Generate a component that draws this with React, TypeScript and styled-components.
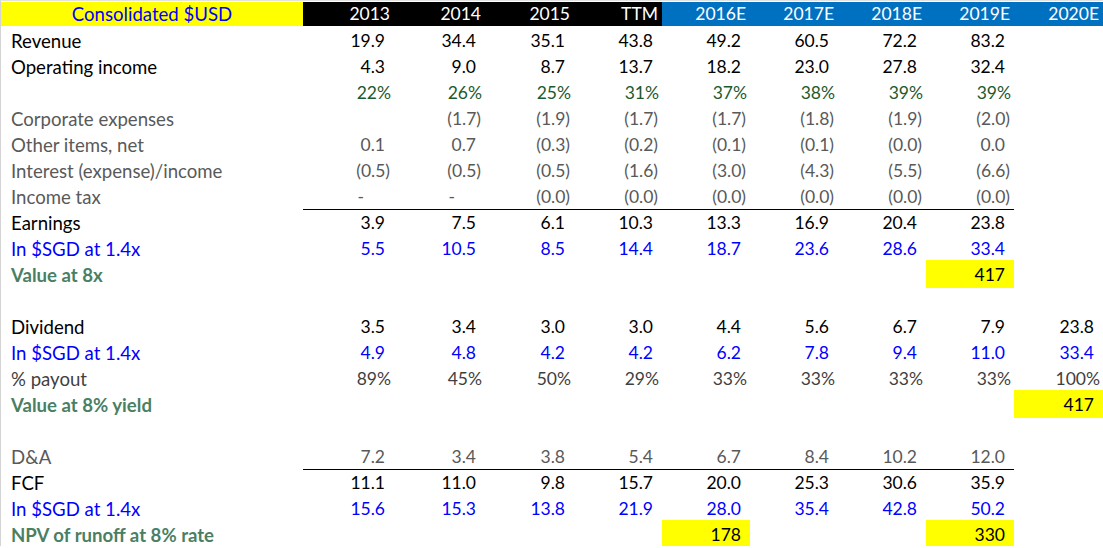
import React from "react";
import styled, { createGlobalStyle, css } from "styled-components";

const Global = createGlobalStyle`
  html, body { margin: 0; padding: 0; background: #ffffff; }
  body { font-family: Lato, "Open Sans", "Liberation Sans", sans-serif; }
`;

type Tone = "black" | "gray" | "dark" | "blue" | "pct" | "value" | "white";

const toneColor: Record<Tone, string> = {
  black: "#000000",
  gray: "#595959",
  dark: "#3f3f3f",
  blue: "#0000ff",
  pct: "#1c5a2c",
  value: "#4a7f64",
  white: "#ffffff",
};

const COLS = "302px 91px 91px 89px 88px 88px 88px 88px 88px 89px";

const Sheet = styled.div`
  width: 1102px;
  border-left: 1px solid #d4d4d4;
  border-top: 1px solid #e2e2e2;
  padding-top: 1px;
  font-size: 17.5px;
`;

const Row = styled.div<{ $head?: boolean }>`
  display: grid;
  grid-template-columns: ${COLS};
  height: ${(p) => (p.$head ? "24px" : "26px")};
`;

const HeadCell = styled.div<{ $bg: string; $fg: string; $center?: boolean }>`
  background: ${(p) => p.$bg};
  color: ${(p) => p.$fg};
  font-size: ${(p) => (p.$center ? "18.6px" : "17.5px")};
  line-height: 24px;
  text-align: ${(p) => (p.$center ? "center" : "right")};
  padding-right: ${(p) => (p.$center ? "0" : "4px")};
  white-space: nowrap;
  box-sizing: border-box;
`;

const LabelCell = styled.div<{ $tone: Tone; $bold?: boolean }>`
  color: ${(p) => toneColor[p.$tone]};
  font-weight: ${(p) => (p.$bold ? 700 : 400)};
  font-size: 18.6px;
  line-height: 26px;
  padding: 2px 0 0 10px;
  box-sizing: border-box;
  white-space: nowrap;
`;

type Kind = "num" | "paren" | "pct" | "dash" | "empty";

const padFor: Record<Kind, string> = {
  num: "9px",
  paren: "4px",
  pct: "3px",
  dash: "30px",
  empty: "0",
};

const NumCell = styled.div<{ $tone: Tone; $kind: Kind; $hl?: boolean; $rule?: boolean }>`
  color: ${(p) => toneColor[p.$tone]};
  line-height: 26px;
  padding-top: 2px;
  padding-right: ${(p) => padFor[p.$kind]};
  text-align: right;
  box-sizing: border-box;
  white-space: nowrap;
  ${(p) =>
    p.$hl &&
    css`
      background: #ffff00;
    `}
  ${(p) =>
    p.$rule &&
    css`
      box-shadow: inset 0 -1px 0 #000000;
    `}
`;

type RowSpec = {
  label: string;
  tone: Tone;
  bold?: boolean;
  values: (string | null)[];
  highlight?: number[];
  rule?: boolean;
  valueTone?: Tone;
};

const kindOf = (v: string | null): Kind => {
  if (v === null || v === "") return "empty";
  if (v === "-") return "dash";
  if (v.startsWith("(")) return "paren";
  if (v.endsWith("%")) return "pct";
  return "num";
};

const rows: RowSpec[] = [
  { label: "Revenue", tone: "black", values: ["19.9", "34.4", "35.1", "43.8", "49.2", "60.5", "72.2", "83.2", null] },
  { label: "Operating income", tone: "black", values: ["4.3", "9.0", "8.7", "13.7", "18.2", "23.0", "27.8", "32.4", null] },
  { label: "", tone: "pct", values: ["22%", "26%", "25%", "31%", "37%", "38%", "39%", "39%", null] },
  { label: "Corporate expenses", tone: "gray", values: [null, "(1.7)", "(1.9)", "(1.7)", "(1.7)", "(1.8)", "(1.9)", "(2.0)", null] },
  { label: "Other items, net", tone: "gray", values: ["0.1", "0.7", "(0.3)", "(0.2)", "(0.1)", "(0.1)", "(0.0)", "0.0", null] },
  { label: "Interest (expense)/income", tone: "gray", values: ["(0.5)", "(0.5)", "(0.5)", "(1.6)", "(3.0)", "(4.3)", "(5.5)", "(6.6)", null] },
  { label: "Income tax", tone: "gray", rule: true, values: ["-", "-", "(0.0)", "(0.0)", "(0.0)", "(0.0)", "(0.0)", "(0.0)", null] },
  { label: "Earnings", tone: "black", values: ["3.9", "7.5", "6.1", "10.3", "13.3", "16.9", "20.4", "23.8", null] },
  { label: "In $SGD at 1.4x", tone: "blue", values: ["5.5", "10.5", "8.5", "14.4", "18.7", "23.6", "28.6", "33.4", null] },
  { label: "Value at 8x", tone: "value", bold: true, valueTone: "black", highlight: [7], values: [null, null, null, null, null, null, null, "417", null] },
  { label: "", tone: "black", values: [null, null, null, null, null, null, null, null, null] },
  { label: "Dividend", tone: "black", values: ["3.5", "3.4", "3.0", "3.0", "4.4", "5.6", "6.7", "7.9", "23.8"] },
  { label: "In $SGD at 1.4x", tone: "blue", values: ["4.9", "4.8", "4.2", "4.2", "6.2", "7.8", "9.4", "11.0", "33.4"] },
  { label: "% payout", tone: "dark", values: ["89%", "45%", "50%", "29%", "33%", "33%", "33%", "33%", "100%"] },
  { label: "Value at 8% yield", tone: "value", bold: true, valueTone: "black", highlight: [8], values: [null, null, null, null, null, null, null, null, "417"] },
  { label: "", tone: "black", values: [null, null, null, null, null, null, null, null, null] },
  { label: "D&A", tone: "gray", rule: true, values: ["7.2", "3.4", "3.8", "5.4", "6.7", "8.4", "10.2", "12.0", null] },
  { label: "FCF", tone: "black", values: ["11.1", "11.0", "9.8", "15.7", "20.0", "25.3", "30.6", "35.9", null] },
  { label: "In $SGD at 1.4x", tone: "blue", values: ["15.6", "15.3", "13.8", "21.9", "28.0", "35.4", "42.8", "50.2", null] },
  { label: "NPV of runoff at 8% rate", tone: "value", bold: true, valueTone: "black", highlight: [4, 7], values: [null, null, null, null, "178", null, null, "330", null] },
];

const years = ["2013", "2014", "2015", "TTM"];
const estimates = ["2016E", "2017E", "2018E", "2019E", "2020E"];

export default function App() {
  return (
    <>
      <Global />
      <Sheet>
        <Row $head>
          <HeadCell $bg="#ffff00" $fg="#0000ff" $center>
            Consolidated $USD
          </HeadCell>
          {years.map((y) => (
            <HeadCell key={y} $bg="#000000" $fg="#ffffff">
              {y}
            </HeadCell>
          ))}
          {estimates.map((y) => (
            <HeadCell key={y} $bg="#0070c0" $fg="#ffffff">
              {y}
            </HeadCell>
          ))}
        </Row>
        {rows.map((r, i) => (
          <Row key={i}>
            <LabelCell $tone={r.tone} $bold={r.bold}>
              {r.label}
            </LabelCell>
            {r.values.map((v, j) => (
              <NumCell
                key={j}
                $tone={r.valueTone ?? r.tone}
                $kind={kindOf(v)}
                $hl={r.highlight?.includes(j)}
                $rule={r.rule && j < 8}
              >
                {v ?? ""}
              </NumCell>
            ))}
          </Row>
        ))}
      </Sheet>
    </>
  );
}
